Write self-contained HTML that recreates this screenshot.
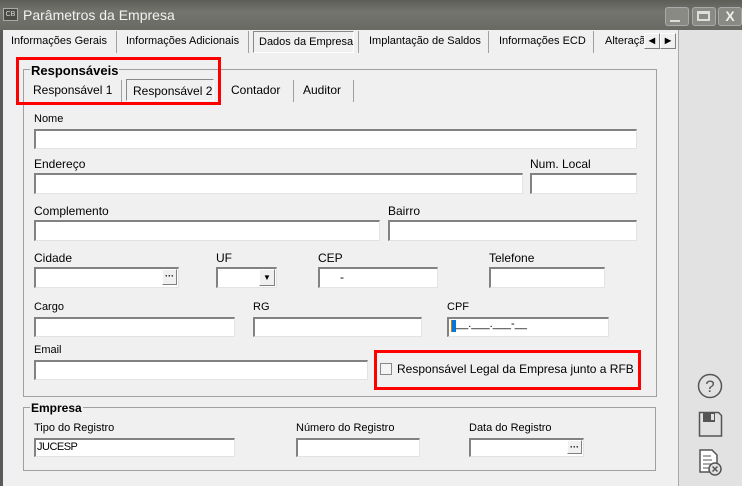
<!DOCTYPE html>
<html><head><meta charset="utf-8"><style>
*{margin:0;padding:0;box-sizing:border-box}
body{width:742px;height:486px;overflow:hidden;background:#f0f0f0;font-family:"Liberation Sans",sans-serif;color:#000;position:relative}
.a{position:absolute;white-space:nowrap}
.t{font-size:12px}
.tb{font-size:11px}
.s{font-size:11px}
.in{position:absolute;background:#fff;border-top:2px solid #828282;border-left:2px solid #828282;border-bottom:1px solid #e3e3e3;border-right:1px solid #e3e3e3}
.sep{position:absolute;width:1px;background:#a0a0a0}
.btn{position:absolute;background:#f0f0f0;border:1px solid #808080;border-top-color:#fff;border-left-color:#fff;font-size:9px;text-align:center;line-height:12px;font-weight:bold}
</style></head><body>
<div class="a" style="left:0;top:0;width:742px;height:30px;background:linear-gradient(#5e5e59,#74746e 40%,#6a6a64)"></div>
<div class="a" style="left:3px;top:8px;width:15px;height:13px;background:#4a4a46;border:1px solid #aaa;color:#ddd;font-size:7px;text-align:center;line-height:11px">CB</div>
<div class="a" style="left:23px;top:7px;font-size:14px;color:#f2f2f2">Parâmetros da Empresa</div>
<div class="a" style="left:665px;top:7px;width:24px;height:19px;background:#8a8a85;border:1px solid #aaa;border-radius:3px"></div>
<div class="a" style="left:670px;top:20px;width:10px;height:2px;background:#ddd"></div>
<div class="a" style="left:692px;top:7px;width:24px;height:19px;background:#8a8a85;border:1px solid #aaa;border-radius:3px"></div>
<div class="a" style="left:697px;top:11px;width:13px;height:10px;border:2px solid #ddd;border-top-width:3px"></div>
<div class="a" style="left:718px;top:7px;width:24px;height:19px;background:#8a8a85;border:1px solid #aaa;border-radius:3px;color:#eee;font-weight:bold;font-size:14px;text-align:center;line-height:17px">X</div>
<div class="a" style="left:0;top:30px;width:3px;height:456px;background:#5a5a56"></div>
<div class="a" style="left:678px;top:30px;width:64px;height:456px;background:#e2e2e2;border-left:1px solid #a8a8a8"></div>
<div class="a tb" style="left:11px;top:35px">Informações Gerais</div>
<div class="sep" style="left:116px;top:31px;height:22px"></div>
<div class="a tb" style="left:126px;top:35px">Informações Adicionais</div>
<div class="sep" style="left:248px;top:31px;height:22px"></div>
<div class="a" style="left:253px;top:31px;width:101px;height:22px;border:1px solid #888;border-right-color:#fff;border-bottom-color:#fff;background:#f0f0f0"></div>
<div class="a tb" style="left:259px;top:36px">Dados da Empresa</div>
<div class="sep" style="left:358px;top:31px;height:22px"></div>
<div class="a tb" style="left:369px;top:35px">Implantação de Saldos</div>
<div class="sep" style="left:488px;top:31px;height:22px"></div>
<div class="a tb" style="left:499px;top:35px">Informações ECD</div>
<div class="sep" style="left:593px;top:31px;height:22px"></div>
<div class="a tb" style="left:605px;top:35px;width:40px;overflow:hidden">Alteração</div>
<div class="btn" style="left:644px;top:33px;width:16px;height:16px;font-size:8px;line-height:14px">◀</div>
<div class="btn" style="left:660px;top:33px;width:16px;height:16px;font-size:8px;line-height:14px">▶</div>

<div class="a" style="left:23px;top:69px;width:634px;height:328px;border:1px solid #a0a0a0"></div>
<div class="a" style="left:30px;top:63px;font-size:13px;font-weight:bold;background:#f0f0f0;padding:0 1px">Responsáveis</div>
<div class="a t" style="left:33px;top:83px">Responsável 1</div>
<div class="sep" style="left:121px;top:80px;height:22px"></div>
<div class="a" style="left:126px;top:79px;width:88px;height:22px;border:1px solid #888;border-right-color:#fff;border-bottom-color:#fff"></div>
<div class="a t" style="left:133px;top:84px">Responsável 2</div>
<div class="sep" style="left:220px;top:80px;height:22px"></div>
<div class="a t" style="left:231px;top:83px">Contador</div>
<div class="sep" style="left:293px;top:80px;height:22px"></div>
<div class="a t" style="left:303px;top:83px">Auditor</div>
<div class="sep" style="left:353px;top:80px;height:22px"></div>
<div class="a" style="left:16px;top:57px;width:205px;height:48px;border:3px solid #f00"></div>

<div class="a s" style="left:34px;top:113px">Nome</div>
<div class="in" style="left:34px;top:129px;width:603px;height:20px"></div>
<div class="a t" style="left:34px;top:157px">Endereço</div>
<div class="in" style="left:34px;top:173px;width:489px;height:21px"></div>
<div class="a t" style="left:530px;top:157px">Num. Local</div>
<div class="in" style="left:530px;top:173px;width:107px;height:21px"></div>
<div class="a t" style="left:34px;top:204px">Complemento</div>
<div class="in" style="left:34px;top:220px;width:346px;height:21px"></div>
<div class="a t" style="left:388px;top:204px">Bairro</div>
<div class="in" style="left:388px;top:220px;width:249px;height:21px"></div>

<div class="a t" style="left:34px;top:251px">Cidade</div>
<div class="in" style="left:34px;top:267px;width:145px;height:21px"></div>
<div class="btn" style="left:162px;top:269px;width:15px;height:16px">···</div>
<div class="a t" style="left:216px;top:251px">UF</div>
<div class="in" style="left:216px;top:267px;width:61px;height:21px"></div>
<div class="btn" style="left:259px;top:269px;width:16px;height:17px;font-size:8px;line-height:15px">▼</div>
<div class="a t" style="left:318px;top:251px">CEP</div>
<div class="in" style="left:318px;top:267px;width:120px;height:21px"></div>
<div class="a t" style="left:340px;top:270px">-</div>
<div class="a t" style="left:489px;top:251px">Telefone</div>
<div class="in" style="left:489px;top:267px;width:116px;height:21px"></div>

<div class="a s" style="left:34px;top:301px">Cargo</div>
<div class="in" style="left:34px;top:317px;width:201px;height:20px"></div>
<div class="a s" style="left:253px;top:301px">RG</div>
<div class="in" style="left:253px;top:317px;width:169px;height:20px"></div>
<div class="a s" style="left:447px;top:301px">CPF</div>
<div class="in" style="left:447px;top:317px;width:162px;height:20px"></div>
<div class="a" style="left:451px;top:320px;width:5px;height:12px;background:#0078d7;border-left:1px solid #d67800"></div>
<div class="a s" style="left:456px;top:318px">__.___.___-__</div>

<div class="a s" style="left:34px;top:344px">Email</div>
<div class="in" style="left:34px;top:360px;width:334px;height:20px"></div>
<div class="a" style="left:374px;top:350px;width:267px;height:40px;border:3px solid #f00"></div>
<div class="a" style="left:380px;top:363px;width:12px;height:12px;border:1px solid #888;background:#f4f4f4"></div>
<div class="a t" style="left:397px;top:362px">Responsável Legal da Empresa junto a RFB</div>

<div class="a" style="left:23px;top:407px;width:633px;height:64px;border:1px solid #a0a0a0"></div>
<div class="a" style="left:30px;top:401px;font-size:12px;font-weight:bold;background:#f0f0f0;padding:0 1px">Empresa</div>
<div class="a s" style="left:34px;top:422px">Tipo do Registro</div>
<div class="in" style="left:34px;top:438px;width:201px;height:19px"></div>
<div class="a s" style="left:37px;top:441px;letter-spacing:-0.5px">JUCESP</div>
<div class="a s" style="left:296px;top:422px">Número do Registro</div>
<div class="in" style="left:296px;top:438px;width:124px;height:19px"></div>
<div class="a s" style="left:469px;top:422px">Data do Registro</div>
<div class="in" style="left:469px;top:438px;width:115px;height:19px"></div>
<div class="btn" style="left:567px;top:440px;width:15px;height:14px">···</div>

<svg class="a" style="left:696px;top:372px" width="30" height="108" viewBox="0 0 30 108">
<circle cx="14" cy="14" r="11.5" fill="none" stroke="#555" stroke-width="1.5"/>
<text x="14" y="20" font-family="Liberation Sans" font-size="17" fill="#555" text-anchor="middle">?</text>
<path d="M3.5 40.5h19l3 3v20.5h-22z" fill="none" stroke="#555" stroke-width="1.5"/>
<rect x="7" y="41" width="12" height="9" fill="#555"/>
<rect x="15" y="42" width="3" height="6" fill="#e2e2e2"/>
<path d="M4 78h12l5 5v17H4z" fill="#fff" stroke="#555" stroke-width="1.5"/>
<path d="M7 84h8M7 88h9M7 92h8M7 96h8" stroke="#555"/>
<circle cx="19" cy="97" r="6" fill="#e2e2e2" stroke="#555" stroke-width="1.5"/>
<path d="M16.5 94.5l5 5M21.5 94.5l-5 5" stroke="#555" stroke-width="1.5"/>
</svg>
</body></html>
